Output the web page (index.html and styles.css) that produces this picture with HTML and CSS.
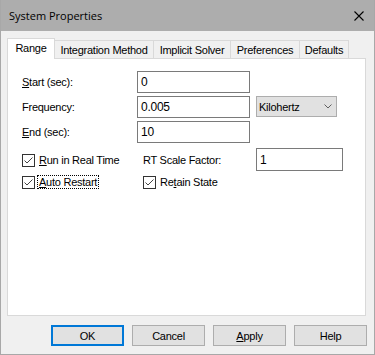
FILE: index.html
```html
<!DOCTYPE html>
<html lang="en">
<head>
  <meta charset="UTF-8" />
  <title>System Properties</title>
  <link rel="stylesheet" href="styles.css">
</head>
<body>
  <div class="window">
    <div class="titlebar">
      <span class="title">System Properties</span>
      <svg class="close" width="10" height="10" viewBox="0 0 10 10">
        <path d="M0.5 0.5L9.5 9.5M9.5 0.5L0.5 9.5" stroke="#000" stroke-width="1.1" fill="none" />
      </svg>
    </div>

    <div class="main">
      <div class="tabs">
        <div class="tab active w-range">Range</div>
        <div class="tab w-integ">Integration Method</div>
        <div class="tab w-impl">Implicit Solver</div>
        <div class="tab w-pref">Preferences</div>
        <div class="tab w-def">Defaults</div>
      </div>

      <div class="panel">
        <div class="fields">
          <span class="label"><u>S</u>tart (sec):</span>
          <div class="input">0</div>
          <span></span>

          <span class="label">Frequency:</span>
          <div class="input">0.005</div>
          <div class="select">
            <span>Kilohertz</span>
            <svg width="8" height="5" viewBox="0 0 8 5">
              <path d="M0.5 0.5L4 4L7.5 0.5" stroke="#606060" stroke-width="1" fill="none" />
            </svg>
          </div>

          <span class="label"><u>E</u>nd (sec):</span>
          <div class="input">10</div>
          <span></span>
        </div>

        <div class="options">
          <div class="check">
            <span class="box"><svg width="11" height="11" viewBox="0 0 11 11"><path d="M1.5 5.5L4 8L9.5 2.5" stroke="#444" stroke-width="1" fill="none" /></svg></span>
            <span class="text"><u>R</u>un in Real Time</span>
          </div>
          <span class="label">RT Scale Factor:</span>
          <div class="input tall">1</div>

          <div class="check">
            <span class="box"><svg width="11" height="11" viewBox="0 0 11 11"><path d="M1.5 5.5L4 8L9.5 2.5" stroke="#444" stroke-width="1" fill="none" /></svg></span>
            <span class="text focus"><u>A</u>uto Restart</span>
          </div>
          <div class="check">
            <span class="box"><svg width="11" height="11" viewBox="0 0 11 11"><path d="M1.5 5.5L4 8L9.5 2.5" stroke="#444" stroke-width="1" fill="none" /></svg></span>
            <span class="text">Re<u>t</u>ain State</span>
          </div>
          <span></span>
        </div>
      </div>

      <div class="buttons">
        <div class="btn default">OK</div>
        <div class="btn">Cancel</div>
        <div class="btn"><u>A</u>pply</div>
        <div class="btn">Help</div>
      </div>
    </div>
  </div>
</body>
</html>
```

FILE: styles.css
```css
body {
  margin: 0;
  background: #f0f0f0;
  font-family: "Liberation Sans", Arial, sans-serif;
  font-size: 11px;
  letter-spacing: -0.25px;
  color: #000;
}
u {
  text-decoration: underline;
  text-underline-offset: 1px;
}
.window {
  width: 375px;
  height: 355px;
  box-sizing: border-box;
  border: 1px solid #a8a8a8;
  border-top: none;
  background: #f0f0f0;
  display: flex;
  flex-direction: column;
}
.titlebar {
  height: 31px;
  flex: none;
  background: #adadad;
  display: flex;
  align-items: center;
  justify-content: space-between;
  padding: 0 10px 1px 8px;
  box-sizing: border-box;
}
.title {
  font-family: "Open Sans", "Noto Sans", sans-serif;
  font-size: 11px;
  letter-spacing: 0;
}
.close {
  display: block;
  margin-top: 1px;
}
.main {
  padding: 7px 7px 0 6px;
}
.tabs {
  display: flex;
  align-items: flex-end;
  height: 20px;
}
.tab {
  height: 18px;
  box-sizing: border-box;
  border: 1px solid #d9d9d9;
  border-bottom: none;
  margin-left: -1px;
  display: flex;
  align-items: center;
  justify-content: center;
  padding-top: 1px;
}
.tab.active {
  height: 21px;
  margin-bottom: -1px;
  background: #fff;
  position: relative;
  z-index: 1;
  margin-left: 0;
  padding-top: 0;
  padding-bottom: 3px;
}
.w-range { width: 48px; }
.w-integ { width: 100px; }
.w-impl { width: 78px; }
.w-pref { width: 70px; }
.w-def { width: 50px; }
.panel {
  height: 258px;
  box-sizing: border-box;
  margin-right: 1px;
  background: #fff;
  border: 1px solid #d9d9d9;
  padding: 12px 0 0 14px;
}
.fields {
  display: grid;
  grid-template-columns: 115px 113px 87px;
  column-gap: 0;
  row-gap: 3px;
  align-items: center;
}
.fields .select {
  margin-left: 6px;
  align-self: start;
}
.input {
  height: 22px;
  box-sizing: border-box;
  border: 1px solid #7a7a7a;
  background: #fff;
  padding-left: 3px;
  display: flex;
  align-items: center;
  font-size: 12px;
}
.input.tall {
  height: 23px;
}
.select {
  height: 21px;
  box-sizing: border-box;
  border: 1px solid #adadad;
  background: #e1e1e1;
  padding: 0 4px 0 2px;
  display: flex;
  align-items: center;
  justify-content: space-between;
}
.select svg {
  display: block;
}
.options {
  display: grid;
  grid-template-columns: 121px 113px 87px;
  grid-template-rows: 23px 21px;
  align-items: center;
  margin-top: 5px;
}
.check {
  display: flex;
  align-items: center;
}
.box {
  width: 13px;
  height: 13px;
  box-sizing: border-box;
  border: 1px solid #333;
  background: #fff;
  display: flex;
  align-items: center;
  justify-content: center;
  margin-right: 2px;
  margin-top: 1px;
}
.box svg {
  display: block;
}
.text {
  border: 1px dotted transparent;
  padding: 0 1px;
  line-height: 12px;
}
.text.focus {
  border-color: #000;
}
.buttons {
  display: flex;
  justify-content: flex-end;
  gap: 8px;
  margin-top: 9px;
}
.btn {
  width: 73px;
  height: 21px;
  box-sizing: border-box;
  border: 1px solid #adadad;
  background: #e1e1e1;
  display: flex;
  align-items: center;
  justify-content: center;
}
.btn.default {
  border: 2px solid #0078d7;
}
```
